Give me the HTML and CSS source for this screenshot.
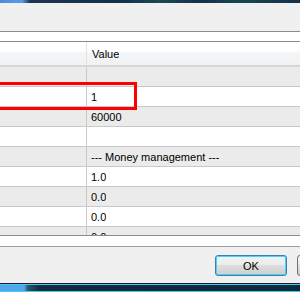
FILE: index.html
```html
<!DOCTYPE html>
<html lang="en">
<head>
    <meta charset="UTF-8">
    <title>Inputs</title>
    <link rel="stylesheet" href="styles.css">
</head>
<body>
    <div class="frame-top"></div>

    <div class="dialog">
        <div class="toolbar"></div>

        <div class="tab-edge"></div>

        <!-- Lista de parametros -->
        <div class="list">
            <div class="list-head">
                <div class="cell name"></div>
                <div class="cell value">Value</div>
            </div>
            <div class="rows" id="rows"></div>
            <div class="highlight"></div>
        </div>

        <div class="tab-bottom"></div>

        <div class="buttons">
            <button class="btn btn-ok">OK</button>
            <button class="btn"></button>
        </div>
    </div>

    <div class="frame-bottom"></div>

    <script>
        const values = ['', '1', '60000', '', '--- Money management ---', '1.0', '0.0', '0.0', '0.0'];

        const rows = document.getElementById('rows');
        values.forEach(v => {
            const row = document.createElement('div');
            row.className = 'row';
            row.innerHTML = `<div class="cell name"></div><div class="cell value">${v}</div>`;
            rows.appendChild(row);
        });
    </script>
</body>
</html>
```

FILE: styles.css
```css
body {
    margin: 0;
    width: 300px;
    height: 292px;
    overflow: hidden;
    background-color: #f0f0f0;
    font-family: 'Liberation Sans', Arial, sans-serif;
    font-size: 11px;
    color: #000;
}

/* Bordas da janela */
.frame-top {
    height: 3px;
    background: linear-gradient(to right, #4c8ed8 0, #5a9ce4 22px, #1d3550 30px, #12304a 120px, #1b4a55 160px, #14304c 200px, #1a4650 240px, #13304a 300px);
}
.frame-bottom {
    height: 9px;
    border-top: 1px solid #1a2030;
    box-sizing: border-box;
    background: linear-gradient(to bottom, #2bd3f5 0, #2bd3f5 1px, transparent 1px, transparent 7px, #2bd3f5 7px),
                linear-gradient(to right, #5aa2ec 0, #5aa2ec 24px, #355068 28px, #16283c 40px, #14263a 300px);
}

.dialog {
    height: 280px;
    display: flex;
    flex-direction: column;
}
.toolbar {
    height: 28px;
}
.tab-edge {
    height: 9px;
    background-color: #fff;
    border-top: 1px solid #898c95;
    border-bottom: 1px solid #898c95;
}

/* Lista */
.list {
    position: relative;
    height: 193px;
    overflow: hidden;
    background-color: #fff;
    border-bottom: 1px solid #898c95;
}
.list-head {
    display: flex;
    height: 23px;
    background: linear-gradient(to bottom, #fff 0, #fff 9px, #f4f5f7 11px, #f1f2f4 100%);
    border-bottom: 1px solid #d5d5d5;
}
.list-head .cell {
    line-height: 25px;
}
.list-head .name {
    border-right: 1px solid #e2e3e5;
}
.rows {
    border-top: 1px solid #d8d8d8;
}
.row {
    display: flex;
    height: 19px;
    border-bottom: 1px solid #c9c9c9;
}
.row:nth-child(odd) {
    background-color: #ebebeb;
}
.cell {
    line-height: 20px;
    white-space: nowrap;
    overflow: hidden;
}
.name {
    width: 87px;
    flex-shrink: 0;
    border-right: 1px solid #c9c9c9;
    box-sizing: border-box;
}
.value {
    padding-left: 4px;
}
.list-head .value {
    padding-left: 5px;
}

/* Marcacao vermelha */
.highlight {
    position: absolute;
    left: -4px;
    top: 40px;
    width: 135px;
    height: 22px;
    border: 3px solid #f00;
}

.tab-bottom {
    height: 10px;
    background-color: #fff;
    border-bottom: 1px solid #a0a0a0;
}

/* Botoes */
.buttons {
    display: flex;
    gap: 10px;
    padding: 8px 0 0 215px;
}
.btn {
    flex-shrink: 0;
    width: 72px;
    height: 21px;
    padding: 0;
    font-family: 'Liberation Sans', Arial, sans-serif;
    font-size: 11px;
    color: #000;
    border: 1px solid #707070;
    border-radius: 3px;
    background: linear-gradient(to bottom, #f2f2f2 0, #ebebeb 50%, #dddddd 50%, #cfcfcf 100%);
}
.btn-ok {
    border-color: #3c7fb1;
    box-shadow: inset 0 0 0 1px #48d2f8;
}
```
